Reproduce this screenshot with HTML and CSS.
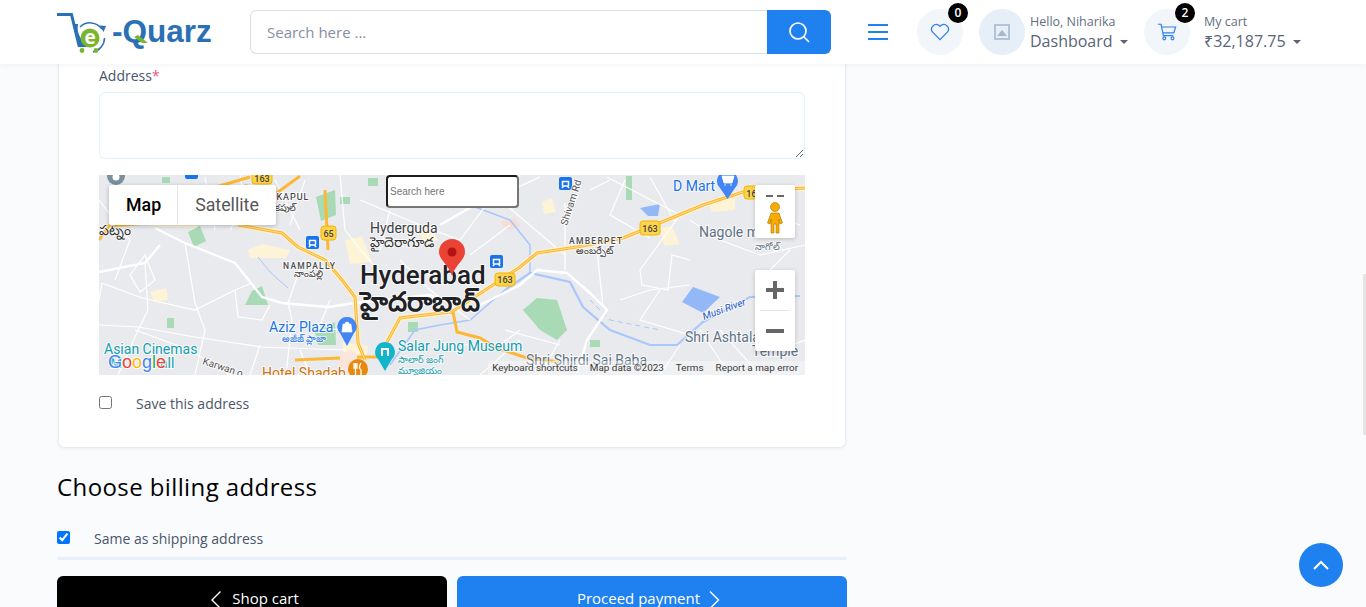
FILE: index.html
```html
<!DOCTYPE html>
<html lang="en">
<head>
	<meta charset="UTF-8">
	<title>Checkout</title>
	<link rel="stylesheet" href="styles.css">
</head>
<body>
	<header class="topbar">
		<a class="logo" href="#">
			<svg width="158" height="46" viewBox="55 8 158 46">
				<path d="M57 13.500H71.500L79 44.500H92" fill="none" stroke="#2a70b4" stroke-width="3"/>
				<path d="M74 23H78C76 33 82 42 92 45H79Z" fill="#2a70b4"/>
				<path d="M80 26A14.500 14.500 0 0 1 102 28M104.500 37A14.500 14.500 0 0 1 93 51" fill="none" stroke="#2a70b4" stroke-width="1.500"/>
				<path d="M100 24.500 106 25 103.500 31Z" fill="#2a70b4"/>
				<circle cx="90" cy="37" r="9.500" fill="#7ab530"/>
				<text class="logo-e" x="90" y="43">e</text>
				<circle cx="82" cy="49.500" r="2.400" fill="#7ab530"/>
				<circle cx="96" cy="49.500" r="2.400" fill="#7ab530"/>
				<text class="logo-text" x="112" y="41">-Quarz</text>
				<path d="M138 34 148 42H142L134 36Z" fill="#7ab530"/>
			</svg>
		</a>
		<form class="search">
			<input class="search-input" type="text" placeholder="Search here ...">
			<button class="search-btn" type="button">
				<svg width="24" height="24" viewBox="0 0 24 24" fill="none" stroke="#fff" stroke-width="1.700"><circle cx="11" cy="11" r="8"/><path d="M17 17l5 5"/></svg>
			</button>
		</form>
		<div class="menu-icon"><i></i><i></i><i></i></div>
		<div class="icon-circle wish">
			<svg width="20" height="18" viewBox="0 0 22 20" fill="none" stroke="#2f80f0" stroke-width="1.400"><path d="M11 18.500 2.800 10.200A5.200 5.200 0 0 1 10 2.800L11 3.800 12 2.800A5.200 5.200 0 0 1 19.200 10.200Z"/></svg>
			<span class="badge">0</span>
		</div>
		<div class="icon-circle avatar">
			<svg width="16" height="16" viewBox="0 0 16 16"><rect x="1" y="1" width="14" height="14" fill="none" stroke="#a9b8cf" stroke-width="1.600"/><path d="M3 12 8 6 13 12Z" fill="#a9b8cf"/></svg>
		</div>
		<div class="user-text">
			<small>Hello, Niharika</small>
			<b>Dashboard<i class="caret"></i></b>
		</div>
		<div class="icon-circle cart">
			<svg width="20" height="20" viewBox="0 0 22 22" fill="none" stroke="#2f80f0" stroke-width="1.300"><path d="M1 2.500H4.500L7 15H18M5 5.500H20.500L18.500 12H6.300"/><circle cx="8" cy="18" r="1.600"/><circle cx="17" cy="18" r="1.600"/></svg>
			<span class="badge">2</span>
		</div>
		<div class="user-text cart-text">
			<small>My cart</small>
			<b>₹32,187.75<i class="caret"></i></b>
		</div>
	</header>

	<main class="content">
		<section class="card">
			<label class="field-label">Address<span class="req">*</span></label>
			<textarea class="address-box"></textarea>

			<div class="map">
				<svg class="map-art" width="706" height="200" viewBox="99 175 706 200">
					<!-- tan built up bits -->
					<g fill="#fdf3d6">
						<path d="M145 216 200 220 196 228 150 226Z"/>
						<path d="M248 250 262 244 290 250 286 258 250 258Z"/>
						<path d="M345 240 362 236 372 262 350 264Z"/>
						<path d="M660 228 672 226 680 244 664 246Z"/>
						<path d="M708 202 735 198 735 210 712 212Z"/>
						<path d="M542 202 552 198 556 212 544 214Z"/>
						<path d="M342 342 368 346 366 360 344 358Z"/>
						<path d="M150 292 166 288 168 300 154 302Z"/>
						<path d="M418 228 430 224 438 240 424 244Z"/>
					</g>
					<path d="M340 354 352 350 362 360 350 372 338 366Z" fill="#fbe4dc"/>
					<path d="M500 222 515 218 520 226 508 230Z" fill="#f8dcd6"/>
					<!-- green bits -->
					<g fill="#a8dab5">
						<path d="M523 310 537 298 557 300 567 330 557 340 540 330Z"/>
						<path d="M316 197 335 190 336 215 321 221Z"/>
						<path d="M188 232 200 226 206 241 194 247Z"/>
						<path d="M315 332 335 322 336 345 318 345Z"/>
						<path d="M252 291 262 286 268 305 245 305Z"/>
						<path d="M167 318H174V328H167Z"/>
						<path d="M162 177H170V183H162Z"/>
						<path d="M340 197H350V204H340Z"/>
						<path d="M408 322H418V332H408Z"/>
						<path d="M590 340H600V347H590Z"/>
						<path d="M626 176H632V200H626Z"/>
						<path d="M368 178H378V186H368Z"/>
						<path d="M222 187H231V193H222Z"/>
					</g>
					<!-- water -->
					<path d="M693 287 720 297 703 313 682 302Z" fill="#93b8f7"/>
					<path d="M640 208 660 204 658 216 648 216Z" fill="#93b8f7"/>
					<g fill="none" stroke="#a9c7fb">
						<path d="M505 290 530 273 570 282 583 307 610 330 650 345 677 345 703 322 750 297 800 296" stroke-width="2.200"/>
						<path d="M390 365 415 330 440 325 470 320 505 290" stroke-width="1.500"/>
						<path d="M258 257 270 272 288 288" stroke-width="1"/>
						<path d="M470 205 510 220 530 245 530 273" stroke-width="1.500"/>
						<path d="M590 300 610 320 660 330" stroke-width="1" stroke-dasharray="5 4"/>
					</g>
					<!-- thin white roads -->
					<g fill="none" stroke="#fff" stroke-width="1.200">
						<path d="M145 263 148 310 135 337 118 375"/>
						<path d="M185 243 195 303 205 330 195 375"/>
						<path d="M102 283 142 298 195 310 235 290 252 283"/>
						<path d="M138 327 195 337 262 347 345 350"/>
						<path d="M235 290 238 317 262 320 270 305"/>
						<path d="M302 263 288 303 292 320 286 375"/>
						<path d="M99 325 138 327M99 300 102 283"/>
						<path d="M135 330 190 350 230 375"/>
						<path d="M240 175 250 225M275 180 300 230"/>
						<path d="M340 175 345 230 385 280"/>
						<path d="M360 200 420 225 460 240 490 200 540 177"/>
						<path d="M440 180 500 200 565 255"/>
						<path d="M565 203 565 270"/>
						<path d="M597 250 603 307"/>
						<path d="M607 177 680 215 640 270M625 180 610 215 650 238"/>
						<path d="M590 190 610 180M650 177 675 222"/>
						<path d="M640 270 642 285 668 290 672 255 690 260"/>
						<path d="M620 300 650 290 690 285M660 290 640 320 690 335"/>
						<path d="M690 220 720 240 760 255 805 245"/>
						<path d="M560 340 540 375M520 340 480 375M505 330 560 345"/>
						<path d="M680 345 660 375M720 330 760 375M700 330 730 375"/>
						<path d="M440 345 500 345 520 330"/>
						<path d="M400 260 430 290 470 320"/>
						<path d="M390 210 380 250M470 255 510 225"/>
						<path d="M99 200 130 240 115 280"/>
						<path d="M130 275 145 255 155 280 140 292Z"/>
						<path d="M760 210 800 225M780 350 805 340M770 270 790 250"/>
						<path d="M230 230 260 180M205 177 215 230"/>
						<path d="M290 225 305 180M330 300 318 330 360 328"/>
						<path d="M260 345 250 375M300 350 310 375"/>
					</g>
					<!-- wider white roads -->
					<g fill="none" stroke="#fff" stroke-width="2.400">
						<path d="M155 228 185 243 235 263 262 297 282 303 328 307 355 303"/>
						<path d="M355 303 430 295 470 310 520 285 537 270 567 273 590 293 607 310 587 340 577 373"/>
						<path d="M440 225 500 190 520 175"/>
						<path d="M99 272 145 263 160 245"/>
					</g>
					<!-- orange highways -->
					<g fill="none" stroke="#fff3cf" stroke-width="6" opacity=".8">
						<path d="M450 313 493 285 520 267 537 253 577 247 623 238 650 227 703 205 743 192 805 188"/>
						<path d="M238 225 282 233 298 247 325 260 342 280 355 297 358 343 365 360"/>
						<path d="M387 342 400 318 450 312"/>
					</g>
					<g fill="none" stroke="#fcb735" stroke-width="3">
						<path d="M450 313 493 285 520 267 537 253 577 247 623 238 650 227 703 205 743 192 805 188"/>
						<path d="M238 225 282 233 298 247 325 260 342 280 355 297 358 343 365 360"/>
						<path d="M325 190 328 250"/>
						<path d="M216 187 250 177M245 185 270 198 300 176"/>
						<path d="M387 342 400 318 450 312"/>
						<path d="M453 312 457 332 480 338 497 348 527 358 560 362"/>
						<path d="M357 357H387"/>
						<path d="M99 240 109 226 160 222"/>
						<path d="M295 360 340 358"/>
					</g>
					<g fill="none" stroke="#ffe9a8" stroke-width=".8">
						<path d="M450 313 493 285 520 267 537 253 577 247 623 238 650 227 703 205 743 192 805 188"/>
						<path d="M238 225 282 233 298 247 325 260 342 280 355 297 358 343 365 360"/>
						<path d="M387 342 400 318 450 312"/>
					</g>
					<!-- shields -->
					<g class="shield">
						<rect x="252" y="171" width="20" height="13" rx="3"/><text x="262" y="182">163</text>
						<rect x="321" y="226" width="15" height="14" rx="3"/><text x="328.500" y="237">65</text>
						<rect x="495" y="273" width="20" height="13" rx="3"/><text x="505" y="283">163</text>
						<rect x="640" y="221" width="20" height="14" rx="3"/><text x="650" y="232">163</text>
						<rect x="744" y="186" width="20" height="13" rx="3"/><text x="754" y="197">163</text>
					</g>
					<!-- metro stops -->
					<g fill="#1a73e8">
						<rect x="306" y="236" width="13" height="13" rx="2"/>
						<rect x="490" y="255" width="13" height="13" rx="2"/>
						<rect x="559" y="177" width="13" height="13" rx="2"/>
						<rect x="185" y="170" width="13" height="9" rx="2"/>
					</g>
					<g fill="none" stroke="#fff" stroke-width="1.500">
						<path d="M309.500 245V240.500H315.500V245M309 247 310.500 245H314.500L316 247"/>
						<path d="M493.500 264V259.500H499.500V264M493 266 494.500 264H498.500L500 266"/>
						<path d="M562.500 186V181.500H568.500V186M562 188 563.500 186H567.500L569 188"/>
					</g>
					<!-- labels -->
					<g class="lbl">
						<text class="l-mid" x="370" y="233">Hyderguda</text>
						<text class="l-big" x="360" y="284">Hyderabad</text>
						<text class="l-spaced" x="283" y="269">NAMPALLY</text>
						<text class="l-spaced" x="569" y="244">AMBERPET</text>
						<text class="l-tiny l-gray" x="273" y="200">IKAPUL</text>
						<text class="l-mid l-slate" x="699" y="237">Nagole m</text>
						<text class="l-mid l-slate" x="775" y="237">ta</text>
						<text class="l-mid l-slate" x="685" y="342">Shri Ashtala</text>
						<text class="l-mid l-slate" x="752" y="356">Temple</text>
						<text class="l-mid l-slate" x="526" y="365">Shri Shirdi Sai Baba</text>
						<text class="l-mid l-blue" x="269" y="332">Aziz Plaza</text>
						<text class="l-mid l-blue" x="673" y="191">D Mart</text>
						<text class="l-mid l-teal" x="398" y="351">Salar Jung Museum</text>
						<text class="l-mid l-teal" x="104" y="354">Asian Cinemas</text>
						<text class="l-mid l-teal" x="110" y="368">M</text>
						<text class="l-mid l-teal" x="160" y="368">all</text>
						<text class="l-mid l-orange" x="262" y="378">Hotel Shadab</text>
						<text class="l-road" transform="translate(202 364) rotate(18)">Karwan o</text>
						<text class="l-road" transform="translate(567 226) rotate(-72)">Shivam Rd</text>
						<text class="l-river" transform="translate(704 320) rotate(-20)">Musi River</text>
						<text class="l-telugu" x="370" y="247">హైదెరాగూడ</text>
						<text class="l-telugu-big" x="360" y="311">హైదరాబాద్</text>
						<text class="l-telugu l-small" x="294" y="277">నాంపల్లి</text>
						<text class="l-telugu l-small" x="576" y="254">అంబర్పేట్</text>
						<text class="l-telugu l-small l-blue" x="282" y="342">అజీజ్ ప్లాజా</text>
						<text class="l-telugu l-small l-teal" x="398" y="363">సాలార్ జంగ్</text>
						<text class="l-telugu l-small l-teal" x="398" y="374">మ్యూజియం</text>
						<text class="l-telugu" x="99" y="235">పట్నం</text>
						<text class="l-telugu l-small" x="275" y="211">కపుల్</text>
						<text class="l-telugu l-small l-slate" x="755" y="250">నాగోల్</text>
					</g>
					<!-- map pins -->
					<path d="M347 317A9.500 9.500 0 0 1 354 333L347 346 340 333A9.500 9.500 0 0 1 347 317Z" fill="#4285f4"/>
					<path d="M343 324H351L352 332H342ZM345 324A2 2 0 0 1 349 324" fill="#fff" stroke="#fff" stroke-width=".6"/>
					<path d="M385 342A10 10 0 0 1 392 359L385 371 378 359A10 10 0 0 1 385 342Z" fill="#12b5cb"/>
					<rect x="381" y="348" width="8" height="8" fill="#fff"/>
					<rect x="383" y="350" width="4" height="6" fill="#12b5cb"/>
					<circle cx="358" cy="369" r="10" fill="#e8880c"/>
					<path d="M354 363V368H357V363M355.500 363V375M361 363C359 366 359 369 361 370V375" fill="none" stroke="#fff" stroke-width="1.300"/>
					<path d="M728 171A10 10 0 0 1 735 188L727.500 199 720 188A10 10 0 0 1 728 171Z" fill="#4285f4"/>
					<path d="M722 176H734L732 183H724ZM724 185H726M730 185H732" fill="#fff" stroke="#fff" stroke-width=".8"/>
					<circle cx="116" cy="176" r="9" fill="#78909c"/><circle cx="116" cy="177" r="3.500" fill="#fff"/>
					<path d="M452 239A13 13 0 0 1 465 252C465 260 455 265 452 276 449 265 439 260 439 252A13 13 0 0 1 452 239Z" fill="#ea4335"/>
					<circle cx="452" cy="252" r="4.500" fill="#b31412"/>
					<!-- Google mark -->
					<text class="g-logo" x="108" y="368"><tspan fill="#4285f4">G</tspan><tspan fill="#ea4335">o</tspan><tspan fill="#fbbc05">o</tspan><tspan fill="#4285f4">g</tspan><tspan fill="#34a853">l</tspan><tspan fill="#ea4335">e</tspan></text>
				</svg>

				<input class="map-search" type="text" placeholder="Search here">

				<div class="map-type">
					<span class="map-tab active">Map</span>
					<span class="map-tab">Satellite</span>
				</div>

				<div class="pegman">
					<div class="pegman-dash"><i></i><i></i></div>
					<svg width="18" height="32" viewBox="0 0 18 32"><circle cx="9" cy="5" r="4.500" fill="#f9ab00" stroke="#a77400" stroke-width=".6"/><path d="M5 11H13L16.500 21 14 22 13 17V31H10V22H8V31H5V17L4 22 1.500 21Z" fill="#f9ab00" stroke="#a77400" stroke-width=".6"/></svg>
				</div>

				<div class="zoom-box">
					<button class="zoom-btn" type="button"><svg width="18" height="18" viewBox="0 0 18 18" fill="#666"><path d="M7 0H11V7H18V11H11V18H7V11H0V7H7Z"/></svg></button>
					<hr class="zoom-line">
					<button class="zoom-btn" type="button"><svg width="18" height="18" viewBox="0 0 18 18" fill="#666"><rect y="7" width="18" height="4"/></svg></button>
				</div>

				<div class="map-foot">
					<span>Keyboard shortcuts</span>
					<span>Map data ©2023</span>
					<span>Terms</span>
					<span>Report a map error</span>
				</div>
			</div>

			<label class="check-row save-row"><input type="checkbox">Save this address</label>
		</section>

		<h2 class="billing-title">Choose billing address</h2>
		<label class="check-row same-row"><input type="checkbox" checked>Same as shipping address</label>
		<div class="divider"></div>

		<div class="actions">
			<a class="btn btn-black" href="#">
				<svg width="12" height="18" viewBox="0 0 12 18" fill="none" stroke="#fff" stroke-width="1.400"><path d="M10.500 .5 2 9l8.500 8.500"/></svg>
				Shop cart
			</a>
			<a class="btn btn-blue" href="#">
				Proceed payment
				<svg width="12" height="18" viewBox="0 0 12 18" fill="none" stroke="#fff" stroke-width="1.400"><path d="M2 .5 10.500 9 2 17.500"/></svg>
			</a>
		</div>
	</main>

	<a class="to-top" href="#">
		<svg width="16" height="10" viewBox="0 0 16 10" fill="none" stroke="#fff" stroke-width="2"><path d="M1 9l7-7 7 7"/></svg>
	</a>
	<div class="scroll-thumb"></div>
</body>
</html>
```

FILE: styles.css
```css
*{
	box-sizing: border-box;
}
html,body{
	height: 607px;
	overflow: hidden;
}
body{
	margin: 0;
	background: #fafbfd;
	font-family: "Open Sans", "Noto Sans", sans-serif;
	color: #4a5568;
}
i{
	font-style: normal;
}

/* top bar */
.topbar{
	height: 64px;
	background: #fff;
	box-shadow: 0 1px 6px rgba(60,80,120,.07);
	display: flex;
	align-items: center;
	padding-left: 55px;
	position: relative;
	z-index: 2;
}
.logo{
	display: block;
	width: 195px;
	height: 46px;
	flex: none;
}
.logo-e{
	font: bold 19px "Open Sans", sans-serif;
	fill: #fff;
	text-anchor: middle;
}
.logo-text{
	font: bold 31.500px "Liberation Sans", sans-serif;
	fill: #2a70b4;
}
.search{
	display: flex;
	width: 581px;
	height: 44px;
	flex: none;
}
.search-input{
	flex: 1;
	border: 1px solid #d9dfe9;
	border-right: 0;
	border-radius: 6px 0 0 6px;
	padding: 0 16px;
	font: 15px "Open Sans", sans-serif;
	outline: none;
}
.search-input::placeholder{
	color: #868fa3;
}
.search-btn{
	width: 64px;
	border: 0;
	background: #1f80f0;
	border-radius: 0 6px 6px 0;
	display: flex;
	align-items: center;
	justify-content: center;
	padding: 0;
}
.menu-icon{
	width: 20px;
	margin-left: 37px;
	display: flex;
	flex-direction: column;
	gap: 5px;
	flex: none;
}
.menu-icon i{
	height: 2px;
	background: #1f80f0;
}
.icon-circle{
	width: 46px;
	height: 46px;
	border-radius: 50%;
	background: #f2f5fa;
	display: flex;
	align-items: center;
	justify-content: center;
	position: relative;
	flex: none;
}
.wish{
	margin-left: 29px;
}
.avatar{
	margin-left: 16px;
	background: #e6eef8;
}
.cart{
	margin-left: 16px;
}
.badge{
	position: absolute;
	top: -6px;
	right: -5px;
	width: 20px;
	height: 20px;
	border-radius: 50%;
	background: #000;
	color: #fff;
	font-size: 12px;
	font-weight: 600;
	line-height: 20px;
	text-align: center;
}
.user-text{
	margin-left: 5px;
	padding-top: 2px;
	width: 98px;
	flex: none;
	display: flex;
	flex-direction: column;
}
.cart-text{
	margin-left: 14px;
}
.user-text small{
	font-size: 12.500px;
	line-height: 17px;
	color: #646e82;
}
.user-text b{
	font-size: 16px;
	font-weight: 400;
	line-height: 23px;
	color: #5a6478;
	white-space: nowrap;
}
.caret{
	display: inline-block;
	margin-left: 7px;
	vertical-align: 3px;
	border-top: 4px solid #5a6478;
	border-left: 4px solid transparent;
	border-right: 4px solid transparent;
}

/* page */
.content{
	width: 790px;
	margin-left: 57px;
}
.card{
	margin: 0 1px;
	background: #fff;
	border: 1px solid #e6ecf5;
	border-top: 0;
	border-radius: 0 0 6px 6px;
	box-shadow: 0 1px 3px rgba(60,90,140,.08);
	padding: 2px 40px 0;
	height: 384px;
}
.field-label{
	display: block;
	font-size: 14px;
	line-height: 20px;
	margin-bottom: 6px;
}
.req{
	color: #f2547d;
}
.address-box{
	display: block;
	width: 706px;
	height: 67px;
	border: 1px solid #e0f0ff;
	border-radius: 6px;
	margin-bottom: 16px;
	outline: none;
}
.check-row{
	display: flex;
	align-items: center;
	font-size: 14px;
	line-height: 20px;
}
.check-row input{
	width: 13px;
	height: 13px;
	margin: 0 24px 4px 0;
	flex: none;
}
.save-row{
	margin-top: 19px;
}
.billing-title{
	margin: 21px 0 0;
	font-size: 24px;
	font-weight: 400;
	line-height: 36px;
	letter-spacing: .4px;
	color: #000;
}
.same-row{
	margin-top: 24px;
}
.divider{
	height: 3px;
	background: #e8f1fb;
	margin-top: 8px;
	border-radius: 2px;
}
.actions{
	display: flex;
	gap: 10px;
	margin-top: 16px;
}
.btn{
	flex: 0 0 390px;
	height: 46px;
	border-radius: 6px;
	color: #fff;
	font-size: 15px;
	line-height: 20px;
	text-decoration: none;
	display: flex;
	align-items: flex-start;
	justify-content: center;
	padding-top: 12px;
}
.btn-black{
	background: #000;
	gap: 10px;
	padding-left: 5px;
}
.btn-blue{
	background: #1f80f0;
	gap: 8px;
	padding-right: 7px;
}
.btn svg{
	margin-top: 3px;
}

/* map */
.map{
	position: relative;
	width: 706px;
	height: 200px;
	background: #e9eaed;
	overflow: hidden;
}
.map-art{
	display: block;
}
.shield rect{
	fill: #fcd34d;
	stroke: #f5b400;
}
.shield text{
	font: 500 9px Roboto, sans-serif;
	fill: #444;
	text-anchor: middle;
}
.lbl text{
	font-family: Roboto, "Noto Sans", sans-serif;
	fill: #222;
	paint-order: stroke;
	stroke: rgba(255,255,255,.75);
	stroke-width: 2px;
}
.lbl .l-mid{
	font-size: 14px;
	fill: #3c4043;
}
.lbl .l-big{
	font-size: 26px;
	font-weight: 500;
	fill: #202124;
}
.lbl .l-spaced{
	font-size: 8.500px;
	font-weight: 500;
	letter-spacing: 1.300px;
	fill: #4a4d52;
}
.lbl .l-tiny{
	font-size: 9px;
	letter-spacing: 1px;
}
.lbl .l-slate{
	fill: #5f7284;
}
.lbl .l-blue{
	fill: #1a73e8;
}
.lbl .l-teal{
	fill: #129eaf;
}
.lbl .l-orange{
	fill: #d0730a;
}
.lbl .l-road{
	font-size: 10px;
	fill: #555;
}
.lbl .l-river{
	font-size: 10px;
	font-style: italic;
	fill: #1a56c4;
}
.lbl .l-telugu{
	font-size: 14px;
	fill: #333;
}
.lbl .l-telugu-big{
	font-size: 27px;
	font-weight: 700;
	fill: #202124;
}
.lbl .l-small{
	font-size: 9.500px;
}
.lbl .l-small.l-blue{
	fill: #1a73e8;
}
.lbl .l-small.l-teal{
	fill: #129eaf;
}
.lbl .l-small.l-slate{
	fill: #5f7284;
}
.g-logo{
	font: 18px "Liberation Sans", sans-serif;
	paint-order: stroke;
	stroke: rgba(255,255,255,.8);
	stroke-width: 2px;
}
.map-search{
	position: absolute;
	left: 287px;
	top: 0;
	width: 133px;
	height: 33px;
	padding: 1px 2px;
	font: 10px "Liberation Sans", sans-serif;
	border: 2px solid;
	border-color: #1c1c1c #767676 #767676 #1c1c1c;
	border-radius: 4px;
	background: #fff;
}
.map-search::placeholder{
	color: #757575;
}
.map-type{
	position: absolute;
	left: 10px;
	top: 10px;
	height: 40px;
	background: #fff;
	display: flex;
	border-radius: 2px;
	box-shadow: 0 1px 4px rgba(0,0,0,.25);
	font: 17.800px/40px Roboto, sans-serif;
}
.map-tab{
	padding: 0 17px;
	color: #565656;
}
.map-tab.active{
	color: #000;
	font-weight: 500;
	padding-right: 16px;
	border-right: 1px solid #e6e6e6;
}
.pegman{
	position: absolute;
	left: 656px;
	top: 10px;
	width: 40px;
	height: 53px;
	background: #fff;
	border-radius: 2px;
	box-shadow: 0 1px 4px rgba(0,0,0,.2);
	display: flex;
	flex-direction: column;
	align-items: center;
}
.pegman-dash{
	display: flex;
	gap: 4px;
	margin-top: 10px;
	margin-bottom: 5px;
}
.pegman-dash i{
	width: 7px;
	height: 2px;
	background: #666;
}
.zoom-box{
	position: absolute;
	left: 656px;
	top: 95px;
	width: 40px;
	height: 81px;
	background: #fff;
	border-radius: 2px;
	box-shadow: 0 1px 4px rgba(0,0,0,.2);
}
.zoom-btn{
	display: flex;
	align-items: center;
	justify-content: center;
	width: 40px;
	height: 40px;
	border: 0;
	background: none;
	padding: 0;
}
.zoom-line{
	margin: 0 5px;
	border: 0;
	height: 1px;
	background: #e6e6e6;
}
.map-foot{
	position: absolute;
	right: 0;
	bottom: 0;
	height: 14px;
	display: flex;
	gap: 12px;
	padding: 0 7px 0 4px;
	background: rgba(255,255,255,.35);
	color: #3a3a3a;
	font: 9.900px/14px Roboto, sans-serif;
	white-space: nowrap;
}

/* floating */
.to-top{
	position: fixed;
	left: 1299px;
	top: 543px;
	width: 44px;
	height: 44px;
	border-radius: 50%;
	background: #1f80f0;
	display: flex;
	align-items: center;
	justify-content: center;
}
.scroll-thumb{
	position: fixed;
	left: 1363px;
	top: 274px;
	width: 3px;
	height: 161px;
	background: #e5e5e5;
}
```
